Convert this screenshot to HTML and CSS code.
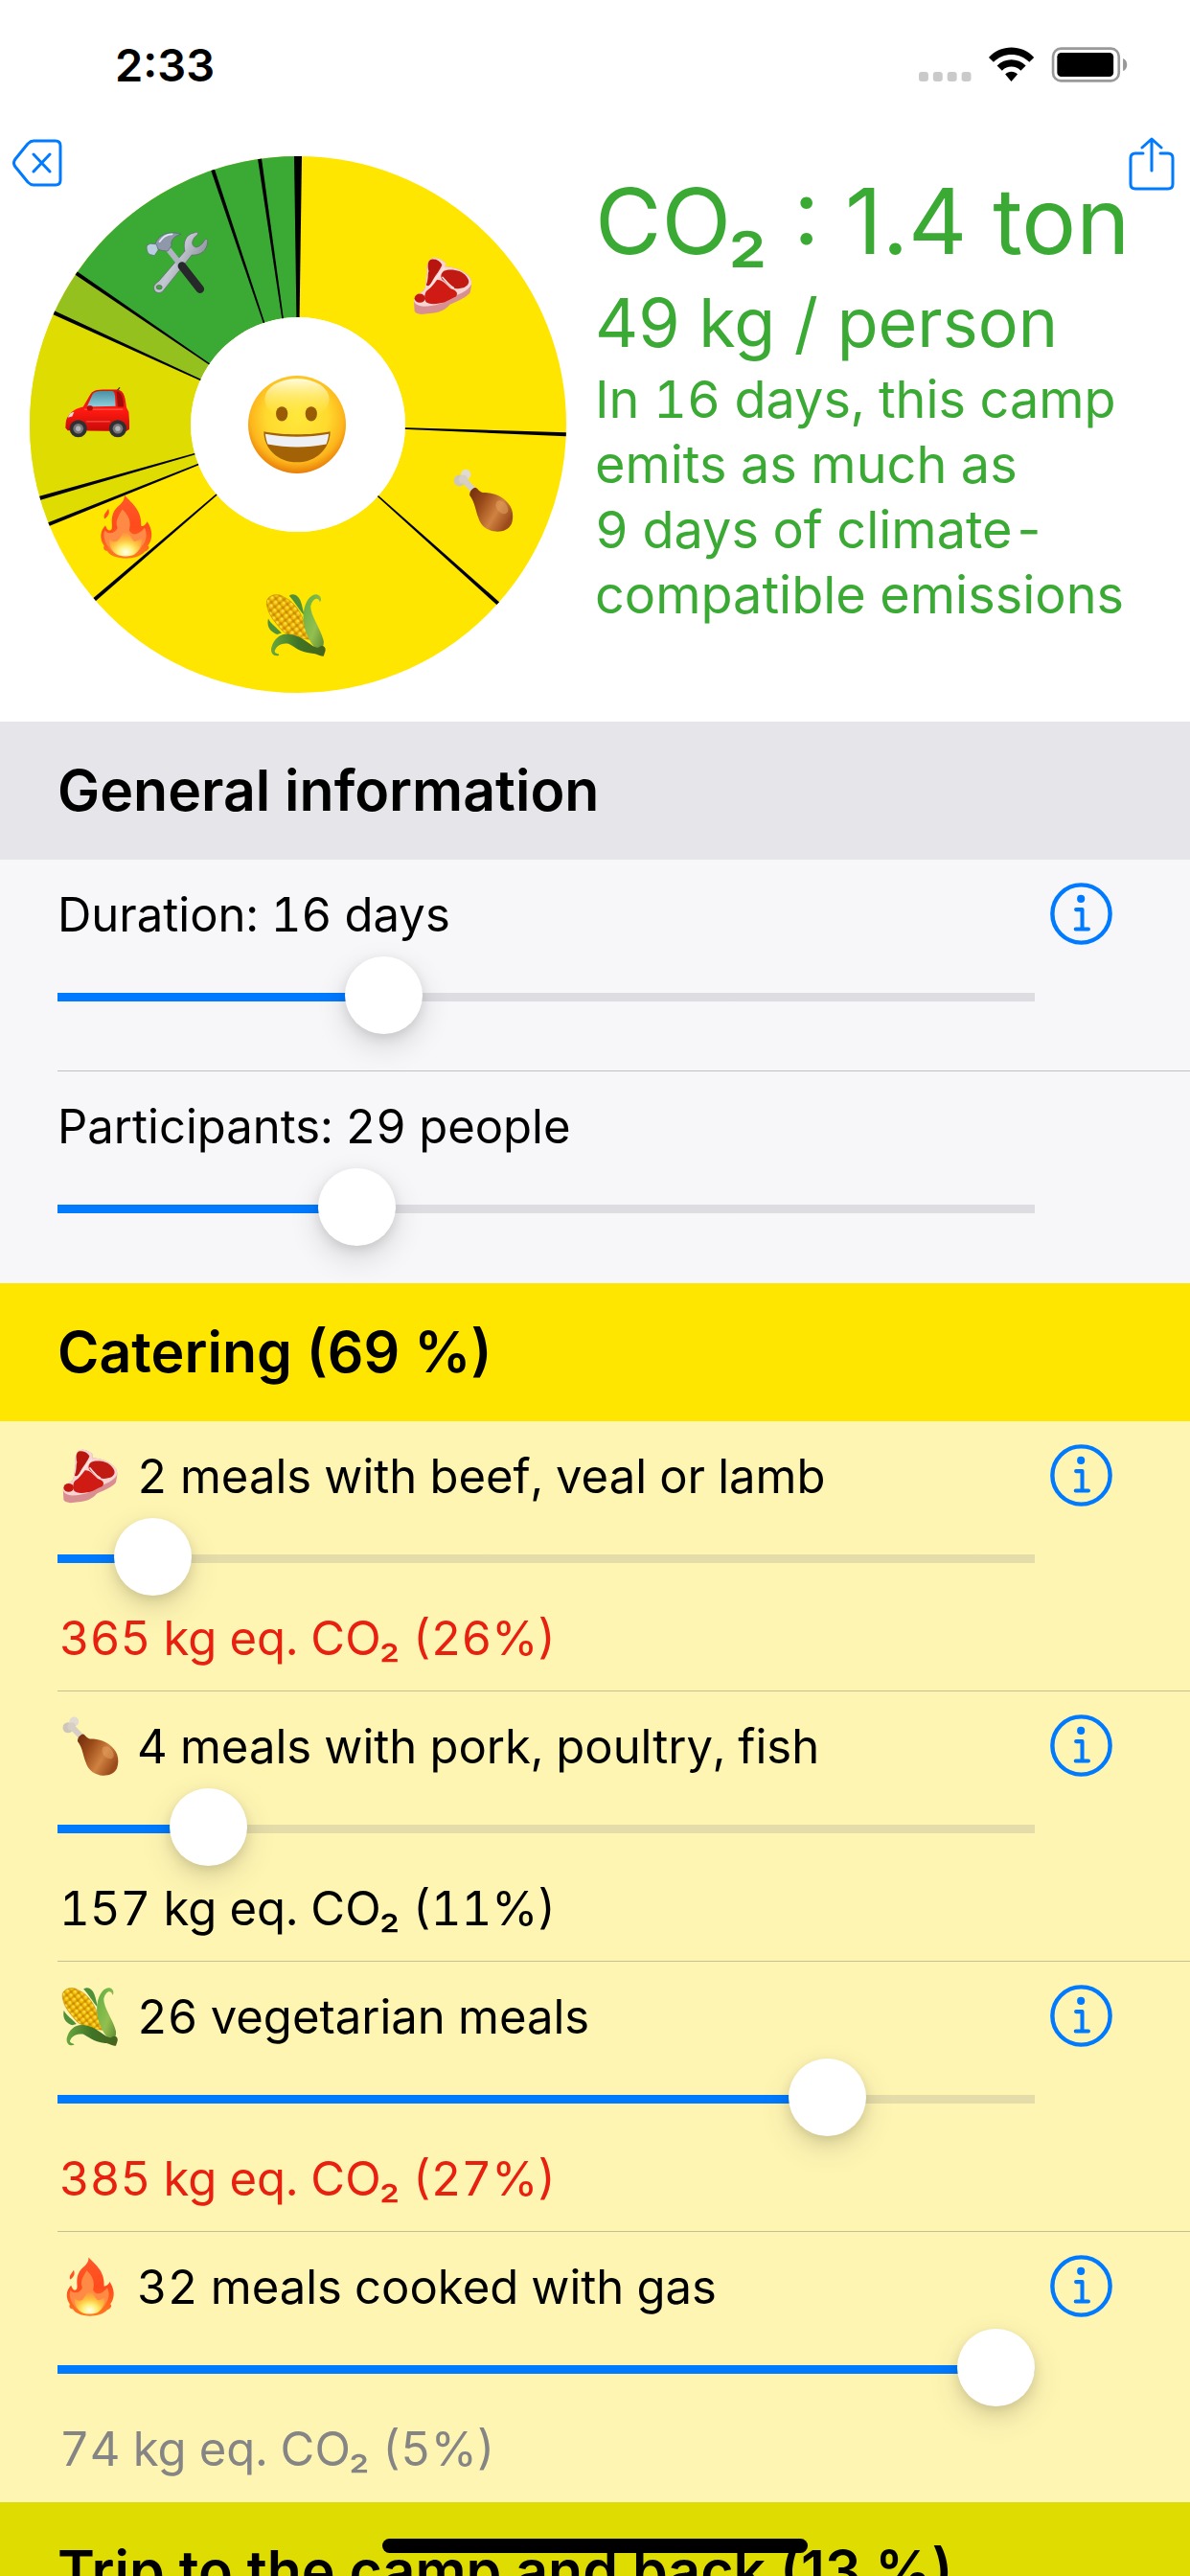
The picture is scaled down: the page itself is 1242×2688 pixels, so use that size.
FILE: index.html
```html
<!DOCTYPE html>
<html lang="en">
<head>
<meta charset="utf-8">
<meta name="viewport" content="width=device-width">
<title>Camp footprint</title>
<link rel="stylesheet" href="styles.css">
</head>
<body>
<svg class="defs" width="0" height="0" aria-hidden="true">
  <defs>
    <linearGradient id="g-meat" x1="0" y1="0" x2="1" y2="0.6">
      <stop offset="0.1" stop-color="#7a3410"/><stop offset="0.35" stop-color="#9a4a18"/><stop offset="0.7" stop-color="#cf8240"/><stop offset="1" stop-color="#9c4c1c"/>
    </linearGradient>
    <linearGradient id="g-leaf" x1="0" y1="0" x2="1" y2="1">
      <stop offset="0" stop-color="#5fae42"/><stop offset="0.6" stop-color="#93bf50"/><stop offset="1" stop-color="#5d8a2e"/>
    </linearGradient>
    <linearGradient id="g-leaf-dark" x1="0" y1="0" x2="1" y2="0">
      <stop offset="0" stop-color="#6aa83e"/><stop offset="0.5" stop-color="#3f7426"/><stop offset="1" stop-color="#47631b"/>
    </linearGradient>
    <linearGradient id="g-steel" x1="0" y1="0" x2="1" y2="0.6">
      <stop offset="0" stop-color="#8a8c96"/><stop offset="0.5" stop-color="#c3c8d2"/><stop offset="1" stop-color="#7d808a"/>
    </linearGradient>
    <linearGradient id="g-car" x1="0" y1="0" x2="0" y2="1">
      <stop offset="0" stop-color="#d81410"/><stop offset="0.5" stop-color="#ff1a10"/><stop offset="1" stop-color="#c80a08"/>
    </linearGradient>
    <linearGradient id="g-glass" x1="0" y1="0" x2="0" y2="1">
      <stop offset="0" stop-color="#4a8fa3"/><stop offset="1" stop-color="#8fd0de"/>
    </linearGradient>
    <linearGradient id="g-fire" x1="0" y1="0" x2="0" y2="1">
      <stop offset="0" stop-color="#ff5a2a"/><stop offset="0.5" stop-color="#ff4a1c"/><stop offset="1" stop-color="#ff7a1e"/>
    </linearGradient>
    <radialGradient id="g-fire-in" cx="0.5" cy="0.85" r="0.75">
      <stop offset="0" stop-color="#fffff0"/><stop offset="0.3" stop-color="#fff27a"/><stop offset="0.6" stop-color="#ffc03c"/><stop offset="1" stop-color="#ff8a40"/>
    </radialGradient>
    <radialGradient id="g-face" cx="0.5" cy="0.42" r="0.58">
      <stop offset="0" stop-color="#ffe83a"/><stop offset="0.55" stop-color="#ffd92e"/><stop offset="0.82" stop-color="#fdb51c"/><stop offset="1" stop-color="#e87c08"/>
    </radialGradient>
    <linearGradient id="g-shine" x1="0" y1="0" x2="0" y2="1">
      <stop offset="0" stop-color="#fffde0"/><stop offset="1" stop-color="#ffe83a" stop-opacity="0"/>
    </linearGradient>
    <pattern id="p-kernel" width="18" height="18" patternUnits="userSpaceOnUse" patternTransform="rotate(52)">
      <rect width="18" height="18" fill="#c98a00"/>
      <ellipse cx="9" cy="9" rx="8" ry="8" fill="#f2be0a"/>
      <ellipse cx="8" cy="7" rx="4" ry="4" fill="#ffe04a"/>
    </pattern>
  </defs>

  <symbol id="steak" viewBox="0 0 200 200">
    <path fill="#d98f92" d="M68 13C80 10 92 14 110 28L108 40C130 40 160 48 178 66C188 74 193 84 191 100L187 122C180 134 150 148 123 160C105 180 85 186 68 187L33 191C20 189 12 186 11 181L9 146C12 134 20 128 40 116C50 100 46 80 51 58C48 45 52 18 68 13Z"/>
    <path fill="#f6d5d2" d="M68 13C80 10 92 14 110 28L108 40C130 40 160 48 178 66C188 74 193 84 191 96C180 118 150 128 123 138C105 158 75 164 40 166C22 164 10 158 9 146C12 134 20 128 40 116C50 100 46 80 51 58C48 45 52 18 68 13Z"/>
    <path fill="#b9150f" d="M62 18C76 14 90 20 98 34C92 52 76 68 66 88C60 100 52 104 48 98C56 78 52 66 56 54C52 42 52 22 62 18Z"/>
    <path fill="#c01a12" d="M104 54C122 46 160 50 174 70C188 86 184 98 168 106C150 112 134 110 122 102C114 94 106 86 98 80C92 70 96 60 104 54Z"/>
    <path fill="#cf1b13" d="M82 82C100 80 112 98 126 110C144 116 150 124 142 135C124 142 112 154 90 156C70 160 52 158 46 150C42 138 42 128 48 118C60 110 72 96 82 82Z"/>
    <ellipse cx="28" cy="140" rx="17" ry="14" fill="#c2180f"/>
    <path fill="none" stroke="#fbe6e2" stroke-width="5" stroke-linecap="round" d="M104 46C90 62 76 80 58 106M100 74C112 88 118 98 134 107"/>
  </symbol>

  <symbol id="drumstick" viewBox="0 0 200 200">
    <path fill="none" stroke="#d8cfc4" stroke-width="20" d="M38 34L78 76"/>
    <circle cx="26" cy="38" r="18" fill="#cfc6ba"/>
    <circle cx="46" cy="18" r="16" fill="#e2dbd2"/>
    <circle cx="38" cy="34" r="14" fill="#d8cfc4"/>
    <path fill="url(#g-meat)" d="M76 60C84 62 86 72 100 76C130 76 160 84 180 110C196 128 198 154 190 176C180 196 156 202 134 198C108 194 92 176 86 156C76 132 76 108 58 84C58 72 66 62 76 60Z"/>
    <ellipse cx="160" cy="122" rx="16" ry="24" fill="#e8a868" opacity="0.45" transform="rotate(-40 160 122)"/>
  </symbol>

  <symbol id="corn" viewBox="0 0 200 200">
    <path fill="#4f9138" d="M78 8C96-4 112 12 118 36L126 70C106 48 96 26 78 8ZM12 80C20 98 40 108 54 126L40 130C18 122 6 106 12 80Z"/>
    <path fill="url(#p-kernel)" stroke="#c48a08" stroke-width="2" d="M7 32C5 8 40-4 60 12C104 30 128 84 142 146C100 142 62 132 44 104C22 78 10 60 7 32Z"/>
    <path fill="url(#g-leaf)" d="M175 28C172 10 152 14 146 42C146 72 178 112 187 150C190 178 172 184 156 168C130 136 116 88 126 48C134 18 150 2 166 4C180 8 182 24 175 28Z"/>
    <path fill="url(#g-leaf-dark)" d="M187 199C174 200 166 190 150 190C110 188 92 166 76 160C50 156 36 170 32 184C36 194 48 190 46 196C30 202 18 190 22 172C30 142 54 124 82 130C122 134 150 172 170 172C186 160 196 172 192 184Z"/>
  </symbol>

  <symbol id="fire" viewBox="0 0 200 200">
    <path fill="url(#g-fire)" d="M95 2C120 28 150 50 147 98C156 100 162 92 166 84C182 108 186 136 168 160C176 162 170 176 158 178C146 192 124 198 100 199C70 198 50 190 42 176C32 176 28 168 32 160C16 136 20 112 36 96C40 106 44 116 54 110C62 100 48 78 64 50C78 30 96 26 95 2ZM45 44C52 60 42 70 33 76C28 62 38 56 45 44Z"/>
    <path fill="#ff8a45" d="M88 46C112 66 116 88 110 112C122 132 142 124 158 104C170 128 160 150 146 168C134 186 120 192 100 194C76 192 56 182 46 164C32 146 28 126 34 112C46 126 66 122 74 104C64 82 78 66 88 46Z"/>
    <path fill="url(#g-fire-in)" d="M98 108C110 120 116 138 126 146C136 146 142 140 150 136C152 156 140 178 124 188C108 194 84 194 70 186C54 174 46 156 48 138C56 148 66 150 74 144C84 134 90 120 98 108Z"/>
  </symbol>

  <symbol id="car" viewBox="0 0 200 200">
    <path fill="none" stroke="#3a3a20" stroke-width="4" d="M162 32L170 22"/>
    <path fill="url(#g-car)" d="M2 132C4 108 26 88 56 82L76 48C84 30 98 28 126 28L162 28C186 30 188 60 191 84L198 98L200 126L200 152L190 158L8 156L1 148Z"/>
    <path fill="url(#g-glass)" d="M68 82L84 46C88 36 98 33 116 33L146 33C154 34 156 40 157 80Z"/>
    <path fill="#a00c0a" d="M160 34C176 34 182 56 182 82L164 82Z"/>
    <path fill="none" stroke="#ff8a80" stroke-width="2" d="M66 128H140M60 90H180"/>
    <rect x="68" y="78" width="18" height="16" rx="6" fill="#b80a0a"/>
    <path fill="#f0d8d8" d="M8 116C12 104 20 98 28 98L22 112Z"/>
    <circle cx="41" cy="150" r="27" fill="#303033"/><circle cx="41" cy="150" r="16" fill="#77777a"/><circle cx="41" cy="150" r="8" fill="#b5b5b8"/>
    <circle cx="164" cy="150" r="27" fill="#303033"/><circle cx="164" cy="150" r="16" fill="#77777a"/><circle cx="164" cy="150" r="8" fill="#b5b5b8"/>
  </symbol>

  <symbol id="tools" viewBox="0 0 200 200">
    <path fill="url(#g-steel)" stroke="#5c5f68" stroke-width="2" d="M124 64C118 40 124 10 156 5C164 2 168 6 164 12C150 22 142 38 152 48C162 58 178 44 186 30C190 22 198 26 196 36C194 60 176 78 146 76L58 186C50 200 28 198 26 182C24 168 36 164 42 158Z"/>
    <ellipse cx="43" cy="178" rx="9" ry="7" fill="#3aaa35" stroke="#5c5f68" stroke-width="2"/>
    <path fill="none" stroke="#aeb4c0" stroke-width="18" d="M70 56L110 106"/>
    <path fill="none" stroke="#26282a" stroke-width="26" stroke-linecap="round" d="M115 111L172 184"/>
    <path fill="#8f98a8" stroke="#596070" stroke-width="2" d="M30 42C40 12 70-2 112 10C92 16 78 28 82 46L70 64L52 62L40 58Z"/>
    <path fill="#b9cede" stroke="#596070" stroke-width="2" d="M4 46L14 40L34 42L40 60L28 78L12 74C4 66 2 56 4 46Z"/>
    <path fill="none" stroke="#dfe8f2" stroke-width="5" stroke-linecap="round" d="M44 34C54 18 68 10 84 10"/>
  </symbol>

  <symbol id="grin" viewBox="0 0 200 200">
    <circle cx="100" cy="100" r="100" fill="url(#g-face)"/>
    <ellipse cx="100" cy="48" rx="66" ry="42" fill="url(#g-shine)"/>
    <ellipse cx="69" cy="78" rx="12" ry="15" fill="#9a5b05"/><ellipse cx="129" cy="78" rx="12" ry="15" fill="#9a5b05"/>
    <path fill="#a26205" d="M32 114C70 122 130 122 168 114C168 148 140 177 100 177C60 177 32 148 32 114Z"/>
    <path fill="#eef0f4" d="M35 119C74 127 126 127 165 119C164 128 162 134 160 140C120 148 80 148 40 140C38 134 36 128 35 119Z"/>
  </symbol>

  <symbol id="info" viewBox="0 0 192 192">
    <circle cx="96" cy="96" r="89" fill="none" stroke="currentColor" stroke-width="13"/>
    <circle cx="95" cy="50" r="12" fill="currentColor"/>
    <path fill="none" stroke="currentColor" stroke-width="12" stroke-linecap="round" stroke-linejoin="round" d="M80 83H99V143M79 143H118"/>
  </symbol>
</svg>

<div class="app">
  <header class="status">
    <span class="status-time">2:33</span>
    <svg class="status-icons" viewBox="54 56 660 112" role="img" aria-label="Wi-Fi on, battery full">
      <g fill="#cacaca"><rect x="54" y="135" width="30" height="30" rx="9"/><rect x="99" y="135" width="30" height="30" rx="9"/><rect x="144" y="135" width="30" height="30" rx="9"/><rect x="189" y="135" width="30" height="30" rx="9"/></g>
      <path d="M275 89C313 47 380 47 418 89L403 104C372 72 321 72 290 104ZM301 115C326 90 367 90 392 115L376 131C360 114 333 114 317 131ZM327 142C338 131 355 131 366 142L346 165Z"/>
      <rect x="478" y="61" width="208" height="102" rx="25" fill="none" stroke="#999" stroke-width="8"/>
      <rect x="491" y="74" width="178" height="76" rx="13"/>
      <path fill="#999" d="M699 92C716 98 716 126 699 132Z"/>
    </svg>
  </header>

  <section class="summary">
    <button class="corner corner-reset" type="button" aria-label="Reset">
      <svg viewBox="0 0 52 50" width="52" height="50"><path fill="none" stroke="currentColor" stroke-width="3" stroke-linejoin="round" stroke-linecap="round" d="M22 2H45Q50 2 50 7V43Q50 48 45 48H22Q19 48 16 45L3 29Q0 25 3 21L16 5Q19 2 22 2ZM22 16L39 34M39 16L22 34"/></svg>
    </button>
    <button class="corner corner-share" type="button" aria-label="Share">
      <svg viewBox="0 0 48 56" width="48" height="56"><path fill="none" stroke="currentColor" stroke-width="3" stroke-linejoin="round" stroke-linecap="round" d="M15 17H7Q2 17 2 22V49Q2 54 7 54H41Q46 54 46 49V22Q46 17 41 17H33M24 35V2M14 11L24 2L34 11"/></svg>
    </button>

    <svg class="chart" viewBox="-280 -280 560 560" role="img" aria-label="Emissions by category">
      <g fill="none" stroke-width="168" transform="rotate(-90)">
        <circle r="196" stroke="#ffe600"/>
        <circle r="196" stroke="#dedc00" pathLength="360" stroke-dasharray="46.4 313.6" stroke-dashoffset="-248.2"/>
        <circle r="196" stroke="#95c11f" pathLength="360" stroke-dasharray="9.7 350.3" stroke-dashoffset="-294.6"/>
        <circle r="196" stroke="#3aaa35" pathLength="360" stroke-dasharray="55.7 304.3" stroke-dashoffset="-304.3"/>
      </g>
      <path d="M0 0L-4-280H4Z"/>
      <path d="M0 0L-2-280H2Z" transform="rotate(92.1)"/>
      <path d="M0 0L-2-280H2Z" transform="rotate(131.8)"/>
      <path d="M0 0L-2-280H2Z" transform="rotate(229.3)"/>
      <path d="M0 0L-2-280H2Z" transform="rotate(248.2)"/>
      <path d="M0 0L-2-280H2Z" transform="rotate(254.1)"/>
      <path d="M0 0L-2-280H2Z" transform="rotate(294.6)"/>
      <path d="M0 0L-2-280H2Z" transform="rotate(304.3)"/>
      <path d="M0 0L-2-280H2Z" transform="rotate(341.5)"/>
      <path d="M0 0L-2-280H2Z" transform="rotate(351.8)"/>
      <circle r="112" fill="#fff"/>
      <use href="#steak" x="118" y="-178" width="66" height="66"/>
      <use href="#drumstick" x="160" y="46" width="66" height="66"/>
      <use href="#corn" x="-35" y="176" width="66" height="66"/>
      <use href="#fire" x="-213" y="73" width="67" height="67"/>
      <use href="#car" x="-243" y="-46" width="67" height="67"/>
      <use href="#tools" x="-159" y="-202" width="66" height="66"/>
      <use href="#grin" x="-52" y="-51" width="102" height="102"/>
    </svg>

    <div class="totals">
      <h1 class="total">CO₂ : 1.4 ton</h1>
      <p class="per-person">49 kg / person</p>
      <p class="explain">In 16 days, this camp<br>emits as much as<br>9 days of climate-<br>compatible emissions</p>
    </div>
  </section>

  <main class="sections">
    <section class="group group-general">
      <h2 class="group-title">General information</h2>
      <div class="row">
        <label class="row-label" for="duration">Duration: 16 days</label>
        <button class="info" type="button" aria-label="About duration"><svg><use href="#info"/></svg></button>
        <input class="slider" id="duration" type="range" min="0" max="50" value="16" style="--fill:.32">
      </div>
      <div class="row">
        <label class="row-label" for="participants">Participants: 29 people</label>
        <input class="slider" id="participants" type="range" min="0" max="100" value="29" style="--fill:.29">
      </div>
    </section>

    <section class="group group-catering">
      <h2 class="group-title">Catering (69 %)</h2>
      <div class="row">
        <label class="row-label" for="beef"><svg class="emoji" aria-hidden="true"><use href="#steak"/></svg>2 meals with beef, veal or lamb</label>
        <button class="info" type="button" aria-label="About beef, veal or lamb"><svg><use href="#info"/></svg></button>
        <input class="slider" id="beef" type="range" min="0" max="32" value="2" style="--fill:.0625">
        <output class="result result-high" for="beef">365 kg eq. CO₂ (26%)</output>
      </div>
      <div class="row">
        <label class="row-label" for="pork"><svg class="emoji" aria-hidden="true"><use href="#drumstick"/></svg>4 meals with pork, poultry, fish</label>
        <button class="info" type="button" aria-label="About pork, poultry, fish"><svg><use href="#info"/></svg></button>
        <input class="slider" id="pork" type="range" min="0" max="32" value="4" style="--fill:.125">
        <output class="result" for="pork">157 kg eq. CO₂ (11%)</output>
      </div>
      <div class="row">
        <label class="row-label" for="veggie"><svg class="emoji" aria-hidden="true"><use href="#corn"/></svg>26 vegetarian meals</label>
        <button class="info" type="button" aria-label="About vegetarian meals"><svg><use href="#info"/></svg></button>
        <input class="slider" id="veggie" type="range" min="0" max="32" value="26" style="--fill:.8125">
        <output class="result result-high" for="veggie">385 kg eq. CO₂ (27%)</output>
      </div>
      <div class="row">
        <label class="row-label" for="gas"><svg class="emoji" aria-hidden="true"><use href="#fire"/></svg>32 meals cooked with gas</label>
        <button class="info" type="button" aria-label="About cooking with gas"><svg><use href="#info"/></svg></button>
        <input class="slider" id="gas" type="range" min="0" max="32" value="32" style="--fill:1">
        <output class="result result-low" for="gas">74 kg eq. CO₂ (5%)</output>
      </div>
    </section>

    <section class="group group-trip">
      <h2 class="group-title">Trip to the camp and back (13 %)</h2>
    </section>
  </main>
  <div class="home-indicator"></div>
</div>
</body>
</html>
```
FILE: styles.css
```css
* { box-sizing: border-box; }

body {
  margin: 0;
  background: #fff;
  color: #000;
  font-family: Inter, "Liberation Sans", sans-serif;
}

h1, h2, p { margin: 0; font-weight: 400; }

button {
  padding: 0;
  border: 0;
  background: none;
  color: #007aff;
}

svg { display: block; }
.defs { position: absolute; }

.app {
  position: relative;
  display: flex;
  flex-direction: column;
  height: 100vh;
  overflow: hidden;
}

.status {
  flex: none;
  display: flex;
  align-items: center;
  justify-content: space-between;
  height: 135px;
  padding: 0 64px 0 120px;
}
.status-time { font-size: 47px; line-height: 60px; font-weight: 600; }
.status-icons { width: 220px; height: 37px; }

.summary {
  position: relative;
  flex: none;
  display: flex;
  align-items: flex-start;
  gap: 30px;
  padding: 28px 0 30px 31px;
  color: #3aaa35;
}
.chart { flex: none; width: 560px; height: 560px; }
.corner { position: absolute; }
.corner-reset { top: 10px; left: 13px; }
.corner-share { top: 8px; right: 16px; }

.totals { padding-top: 8px; white-space: nowrap; }
.total { font-size: 95px; line-height: 120px; }
.per-person { font-size: 70px; line-height: 92px; }
.explain { font-size: 54px; line-height: 68px; }
.explain, .row-label, .result { font-variant-numeric: tabular-nums; }

.sections {
  flex: 1;
  min-height: 0;
  overflow-y: auto;
  scrollbar-width: none;
}

.group-title {
  padding: 0 60px;
  font-size: 59px;
  line-height: 144px;
  font-weight: 600;
  white-space: nowrap;
}
.group-general { background: #f7f7fa; }
.group-general .group-title { background: #e5e5ea; }
.group-catering { background: #fff5b3; }
.group-catering .group-title { background: #ffe600; }
.group-trip .group-title { background: #dedc00; }

.row {
  display: grid;
  grid-template-columns: 1fr 65px;
  column-gap: 16px;
  margin-left: 60px;
  padding: 24px 81px 38px 0;
  border-bottom: 1px solid rgba(60, 60, 67, 0.29);
}
.row:last-child { border-color: transparent; }
.group-catering .row { padding-bottom: 24px; }

.row-label {
  display: flex;
  align-items: center;
  height: 66px;
  font-size: 49px;
}
.emoji { width: 62px; height: 62px; margin: 0 18px 0 3px; }

.info { width: 65px; height: 65px; }
.info svg { width: 65px; height: 65px; }

.slider {
  grid-column: 1;
  appearance: none;
  width: 100%;
  height: 81px;
  margin: 11px 0 0;
  background: none;
}
.slider::-webkit-slider-runnable-track {
  height: 81px;
  background:
    linear-gradient(#007aff, #007aff) 0 38px / calc(40px + var(--fill) * (100% - 81px)) 9px no-repeat,
    linear-gradient(rgba(120, 120, 128, 0.2), rgba(120, 120, 128, 0.2)) 0 38px / 100% 9px no-repeat;
}
.slider::-webkit-slider-thumb {
  appearance: none;
  width: 81px;
  height: 81px;
  border-radius: 50%;
  background: #fff;
  box-shadow: 0 12px 32px rgba(0, 0, 0, 0.14), 0 4px 12px rgba(0, 0, 0, 0.1);
}

.result {
  grid-column: 1;
  margin-top: 15px;
  padding-left: 2px;
  font-size: 49px;
  line-height: 60px;
}
.result-high { color: #e8200f; }
.result-low { color: #858585; }

.home-indicator {
  position: absolute;
  bottom: 24px;
  left: 50%;
  width: 444px;
  height: 15px;
  margin-left: -222px;
  border-radius: 8px;
  background: #000;
}
```
